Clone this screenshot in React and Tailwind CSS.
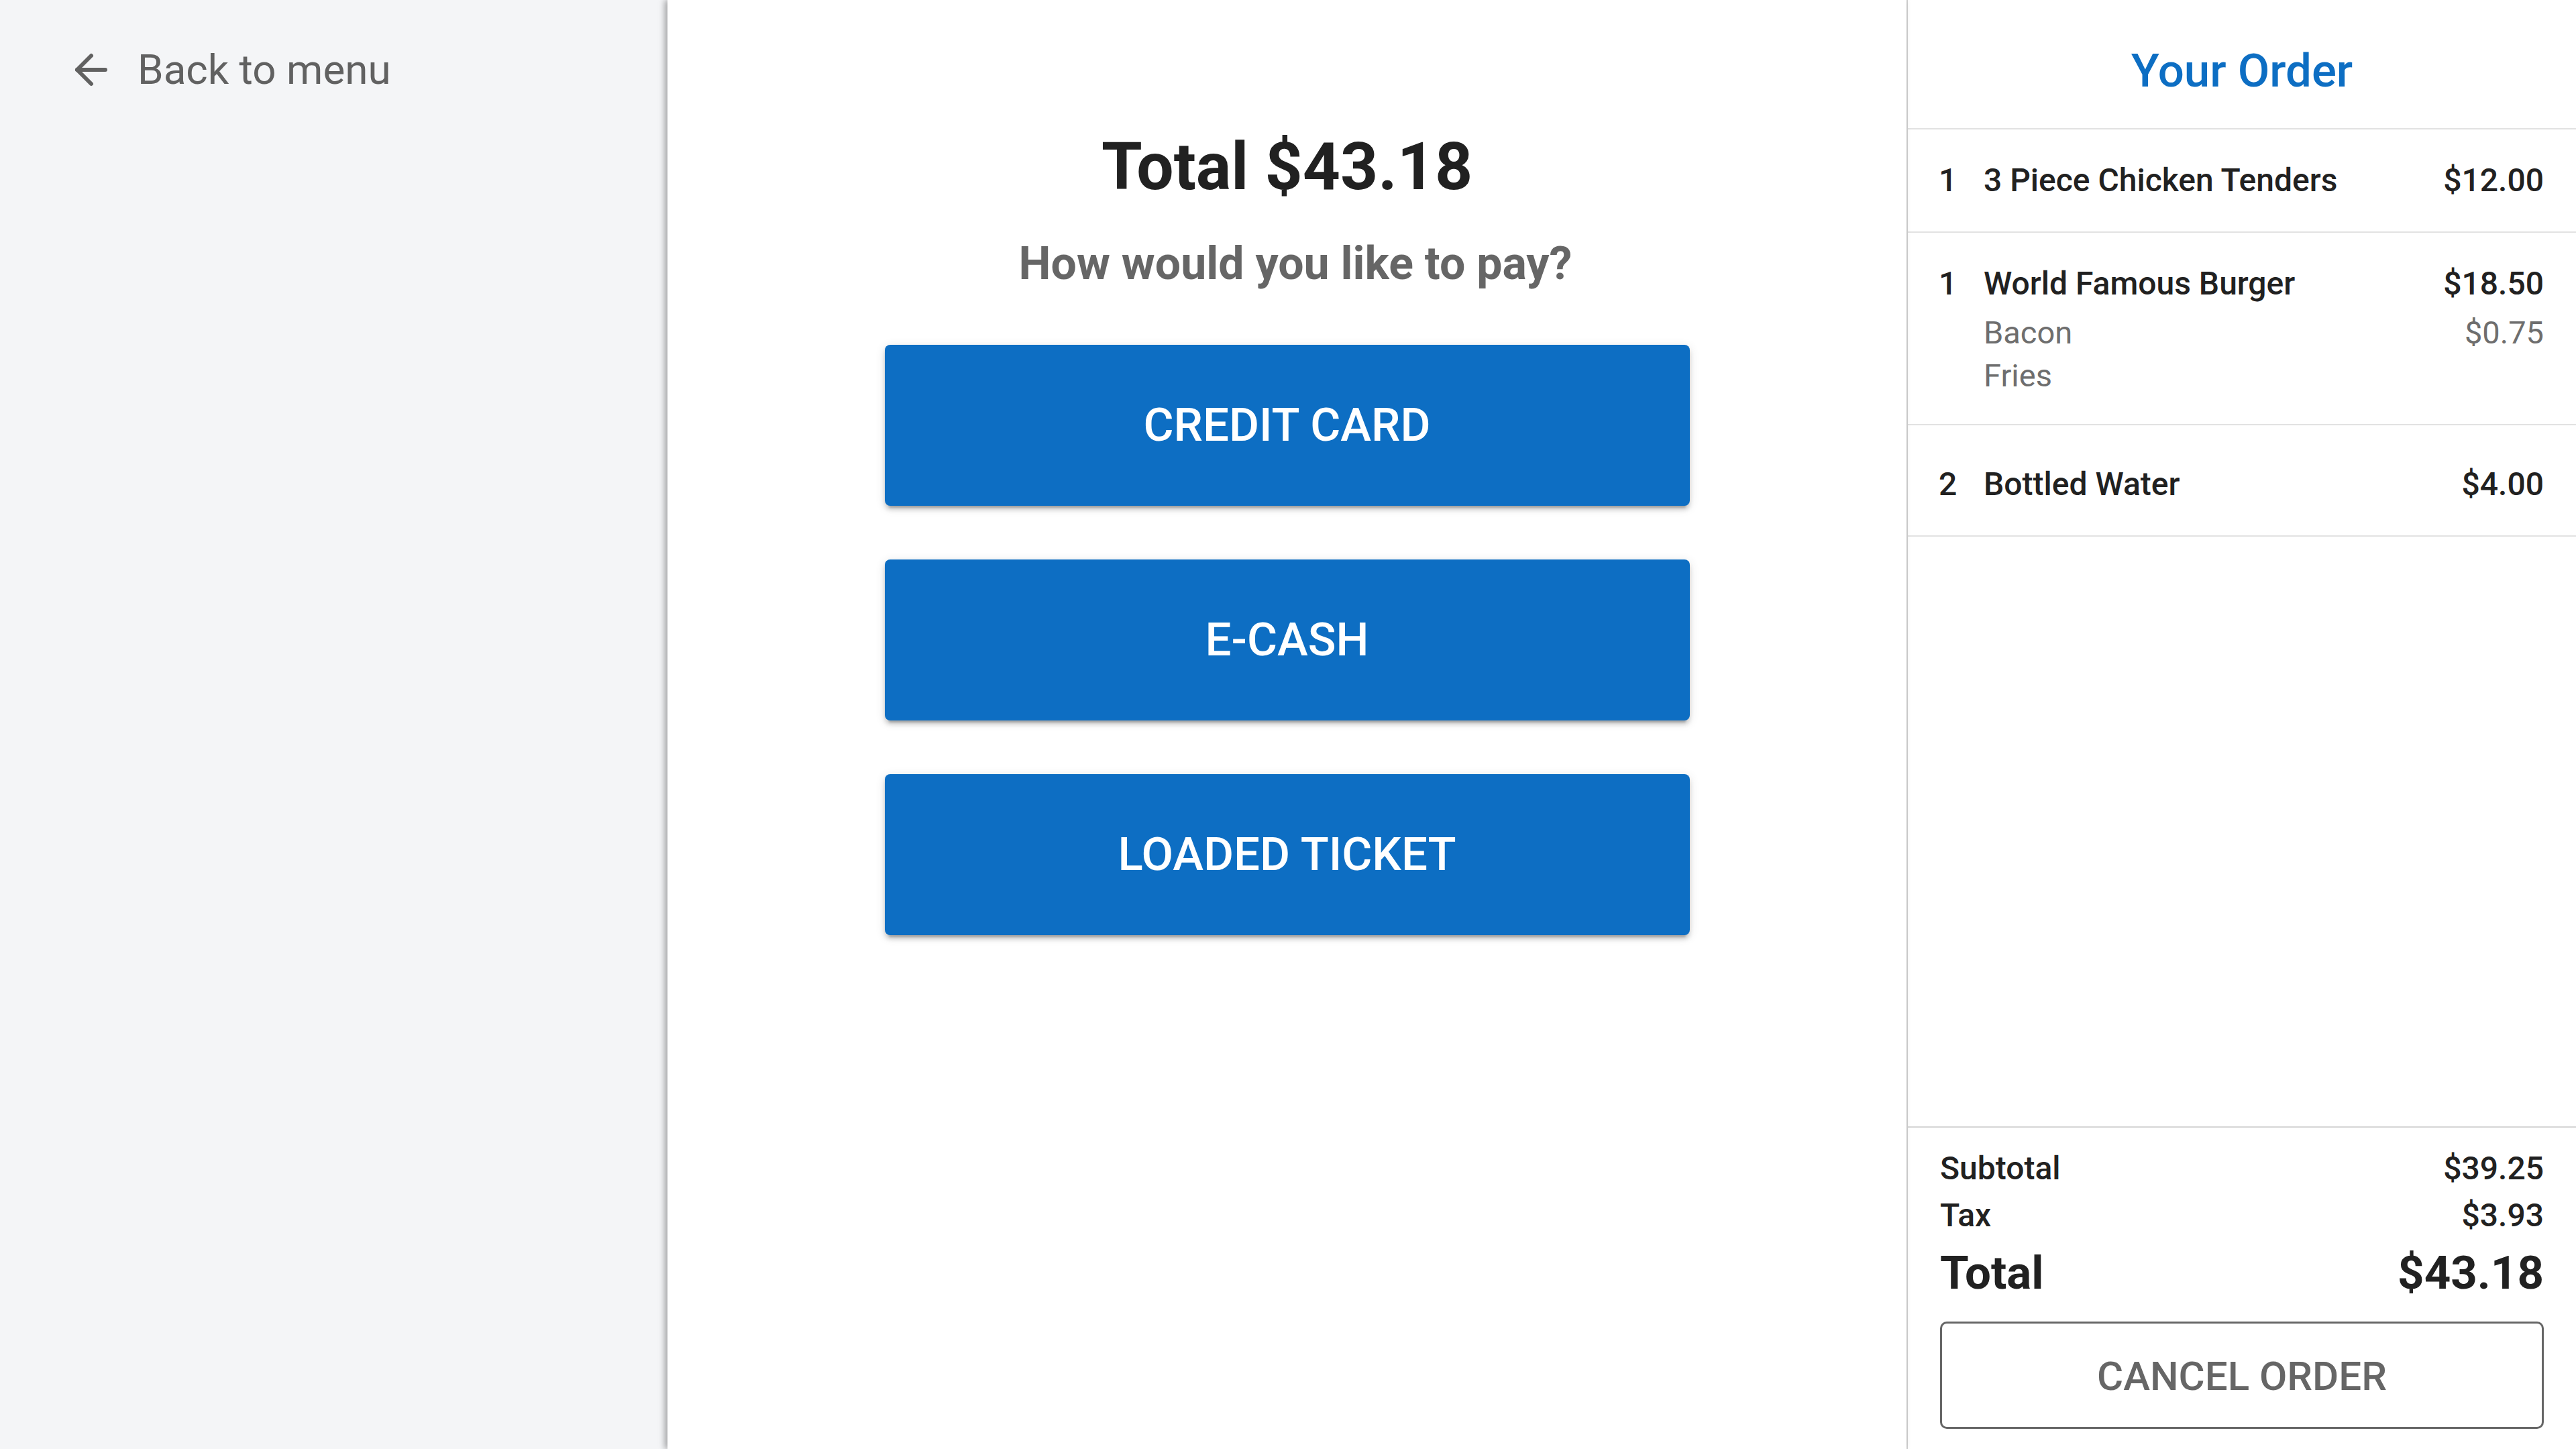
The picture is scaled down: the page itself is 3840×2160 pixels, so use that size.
import { ArrowLeft } from 'lucide-react';

const items = [
    { qty: 1, name: '3 Piece Chicken Tenders', price: '$12.00', mods: [] },
    {
        qty: 1,
        name: 'World Famous Burger',
        price: '$18.50',
        mods: [
            { name: 'Bacon', price: '$0.75' },
            { name: 'Fries', price: '' },
        ],
    },
    { qty: 2, name: 'Bottled Water', price: '$4.00', mods: [], last: true },
];

const payOptions = ['CREDIT CARD', 'E-CASH', 'LOADED TICKET'];

function OrderRow({ item }) {
    return (
        <div className={`border-b-2 border-[#e2e2e2] pl-[46px] pr-[48px] ${item.last ? 'pt-[52px] pb-[40px]' : 'py-[40px]'}`}>
            <div className="flex text-[48px] leading-[72px] font-medium text-[#212121]">
                <span className="w-[67px] shrink-0">{item.qty}</span>
                <span className="flex-1">{item.name}</span>
                <span>{item.price}</span>
            </div>
            {item.mods.length > 0 && (
                <div className="mt-[5px] pl-[67px]">
                    {item.mods.map((mod) => (
                        <div key={mod.name} className="flex justify-between text-[47px] leading-[64px] text-[#6e6e6e]">
                            <span>{mod.name}</span>
                            <span>{mod.price}</span>
                        </div>
                    ))}
                </div>
            )}
        </div>
    );
}

function App() {
    return (
        <div className="flex h-screen w-full overflow-hidden font-[Roboto,sans-serif] bg-white">
            {/* left: back link */}
            <div className="w-[995px] shrink-0 bg-[#f4f5f7]">
                <button className="flex items-center gap-[33px] pl-[100px] pt-[68px] text-[#616161]">
                    <ArrowLeft size={72} strokeWidth={2} />
                    <span className="text-[62px] leading-[72px]">Back to menu</span>
                </button>
            </div>

            {/* middle: payment choice */}
            <div className="relative z-10 flex flex-1 flex-col items-center bg-white pt-[191px] shadow-[-4px_0_9px_rgba(0,0,0,0.35)]">
                <h1 className="text-[98px] leading-[116px] font-bold text-[#212121]">Total $43.18</h1>
                <p className="mt-[45px] pl-[25px] text-[68px] leading-[82px] font-bold text-[#666666]">How would you like to pay?</p>
                <div className="mt-[80px] flex flex-col gap-[80px]">
                    {payOptions.map((opt) => (
                        <button
                            key={opt}
                            className="flex h-[240px] w-[1200px] items-center justify-center rounded-[8px] bg-[#0d6ec3] text-[69px] font-medium text-white shadow-[0_9px_3px_-6px_rgba(0,0,0,0.2),0_6px_6px_0_rgba(0,0,0,0.14),0_3px_15px_0_rgba(0,0,0,0.12)]"
                        >
                            {opt}
                        </button>
                    ))}
                </div>
            </div>

            {/* right: order summary */}
            <div className="flex w-[998px] shrink-0 flex-col border-l-2 border-[#d2d2d2] bg-white">
                <div className="flex h-[193px] shrink-0 items-center justify-center border-b-2 border-[#e2e2e2] pt-[20px]">
                    <h2 className="text-[69px] leading-[82px] font-medium text-[#0d6ec3]">Your Order</h2>
                </div>

                <div className="flex-1">
                    {items.map((item) => (
                        <OrderRow key={item.name} item={item} />
                    ))}
                </div>

                <div className="border-t-2 border-[#d6d6d6] px-[48px] pt-[26px] pb-[30px] text-[#212121]">
                    <div className="flex justify-between text-[48px] leading-[70px] font-medium">
                        <span>Subtotal</span>
                        <span>$39.25</span>
                    </div>
                    <div className="flex justify-between text-[48px] leading-[70px] font-medium">
                        <span>Tax</span>
                        <span>$3.93</span>
                    </div>
                    <div className="mt-[3px] flex justify-between text-[69px] leading-[96px] font-bold">
                        <span>Total</span>
                        <span>$43.18</span>
                    </div>
                    <button className="mt-[24px] flex h-[160px] w-full items-center justify-center rounded-[10px] border-[3px] border-[#666666] pt-[4px] text-[60px] font-medium text-[#666666]">
                        CANCEL ORDER
                    </button>
                </div>
            </div>
        </div>
    );
}

export default App;
